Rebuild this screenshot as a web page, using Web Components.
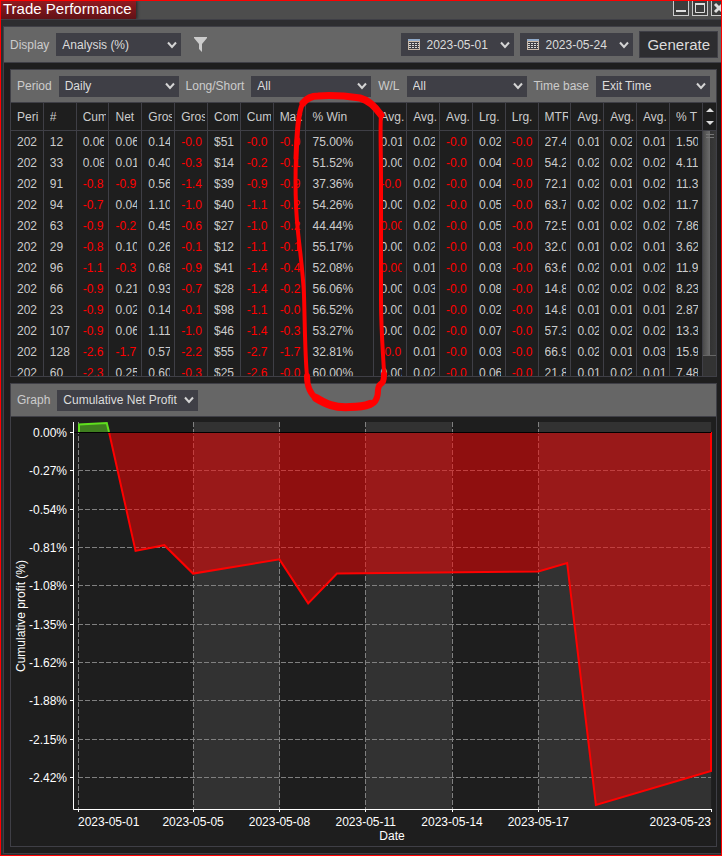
<!DOCTYPE html>
<html lang="en">
<head>
<meta charset="utf-8">
<title>Trade Performance</title>
<style>
    html {
        background: #1e1e1e;
    }

    body {
        margin: 0;
        font: 12px/16px "Liberation Sans", Arial, sans-serif;
        color: #ccc;
    }
</style>
</head>
<body>
<trade-window heading="Trade Performance">
    <tool-bar class="main">
        <drop-down label="Display" value="Analysis (%)" size="medium"></drop-down>
        <filter-button></filter-button>
        <date-picker slot="end" value="2023-05-01" label="Start date"></date-picker>
        <date-picker slot="end" value="2023-05-24" label="End date"></date-picker>
        <action-button slot="end">Generate</action-button>
    </tool-bar>
    <panel-box slot="panels">
        <tool-bar>
            <drop-down label="Period" value="Daily"></drop-down>
            <drop-down label="Long/Short" value="All"></drop-down>
            <drop-down label="W/L" value="All"></drop-down>
            <drop-down label="Time base" value="Exit Time" size="small"></drop-down>
        </tool-bar>
        <performance-table></performance-table>
    </panel-box>
    <panel-box slot="panels">
        <tool-bar>
            <drop-down label="Graph" value="Cumulative Net Profit" size="large"></drop-down>
        </tool-bar>
        <profit-chart></profit-chart>
    </panel-box>
    <pen-mark slot="overlay"></pen-mark>
</trade-window>

<script>
class TradeWindow extends HTMLElement {
    constructor() {
        super();
        this.attachShadow({mode: 'open'});
        this.shadowRoot.innerHTML = `
        <style>
            :host {
                display: block;
                box-sizing: border-box;
                position: relative;
                min-height: 100vh;
                padding-bottom: 1px;
                overflow: hidden;
                background: #2d2d30;
                border: 1px solid #f00;
            }

            header {
                display: flex;
                justify-content: space-between;
                height: 18px;
                overflow: hidden;
                background: #4d4d4d;
                border-bottom: 1px solid #3f3f46;
            }

            h1 {
                margin: 0;
                padding: 0 4px 0 2px;
                font-size: 15px;
                font-weight: normal;
                line-height: 15px;
                color: #fff;
                background: linear-gradient(#8f1a20, #611116);
                box-shadow: 1px 0 3px #222;
            }

            nav {
                display: flex;
                gap: 3px;
                margin-right: -6px;
            }

            nav button {
                box-sizing: border-box;
                width: 16px;
                height: 15px;
                padding: 0;
                background: #3c3c3c;
                border: 1px solid #ccc;
                border-top: 0;
            }

            nav svg {
                display: block;
            }

            main {
                margin: 6px 0 0 2px;
                background: #1e1e1e;
                border: 1px solid #3f3f46;
                border-right: 0;
            }

            .panels {
                display: grid;
                gap: 6px;
                padding: 6px 4px 6px 6px;
            }
        </style>
        <header>
            <h1></h1>
            <nav>
                <button aria-label="Minimize"><svg width="14" height="14"><path d="M2 10h10" stroke="#ddd" stroke-width="2"/></svg></button>
                <button aria-label="Maximize"><svg width="14" height="14"><path d="M2.500 3.500h9v8h-9z" fill="none" stroke="#ddd"/><path d="M2 3h10" stroke="#ddd" stroke-width="2"/></svg></button>
                <button aria-label="Close"><svg width="14" height="14"><path d="M3 3l8 8M11 3l-8 8" stroke="#ddd" stroke-width="3"/></svg></button>
            </nav>
        </header>
        <main>
            <slot></slot>
            <div class="panels"><slot name="panels"></slot></div>
        </main>
        <slot name="overlay"></slot>
        `;
    }

    connectedCallback() {
        this.shadowRoot.querySelector('h1').textContent = this.getAttribute('heading');
    }
}

class PanelBox extends HTMLElement {
    constructor() {
        super();
        this.attachShadow({mode: 'open'});
        this.shadowRoot.innerHTML = `
        <style>
            :host {
                display: block;
                min-width: 0;
                border: 1px solid #3f3f46;
            }
        </style>
        <slot></slot>
        `;
    }
}

class ToolBar extends HTMLElement {
    constructor() {
        super();
        this.attachShadow({mode: 'open'});
        this.shadowRoot.innerHTML = `
        <style>
            :host {
                display: flex;
                align-items: center;
                justify-content: space-between;
                gap: 6px;
                height: 32px;
                padding: 0 6px;
                background: #666;
                border-bottom: 1px solid #3f3f46;
            }

            :host(.main) {
                --control-height: 23px;
                justify-content: flex-start;
                height: 35px;
                padding: 0 3px 0 6px;
            }

            .end {
                display: flex;
                align-items: center;
                gap: 6px;
                margin-left: auto;
            }

            .end.empty {
                display: none;
            }
        </style>
        <slot></slot>
        <div class="end"><slot name="end"></slot></div>
        `;
    }

    connectedCallback() {
        if (!this.querySelector('[slot=end]')) {
            this.shadowRoot.querySelector('.end').classList.add('empty');
        }
    }
}

class DropDown extends HTMLElement {
    constructor() {
        super();
        this.attachShadow({mode: 'open'});
        this.shadowRoot.innerHTML = `
        <style>
            :host {
                display: flex;
                align-items: center;
                gap: 7px;
                white-space: nowrap;
            }

            .box {
                display: grid;
                align-items: center;
                width: 120px;
            }

            :host([size=small]) .box {
                width: 114px;
            }

            :host([size=medium]) .box {
                width: 125px;
            }

            :host([size=large]) .box {
                width: 141px;
            }

            select, svg {
                grid-area: 1 / 1;
            }

            select {
                appearance: none;
                box-sizing: border-box;
                width: 100%;
                height: var(--control-height, 21px);
                margin: 0;
                padding: 0 0 0 6px;
                font: inherit;
                color: #dcdcdc;
                background: #3f3f46;
                border: 0;
                border-radius: 0;
            }

            svg {
                justify-self: end;
                margin-right: 4px;
                pointer-events: none;
            }
        </style>
        <label for="field"></label>
        <span class="box">
            <select id="field"><option></option></select>
            <svg width="10" height="8"><path d="M1 1.500l4 4.500l4-4.500" fill="none" stroke="#d4d4d4" stroke-width="2"/></svg>
        </span>
        `;
    }

    connectedCallback() {
        this.shadowRoot.querySelector('label').textContent = this.getAttribute('label');
        this.shadowRoot.querySelector('option').textContent = this.getAttribute('value');
    }
}

class FilterButton extends HTMLElement {
    constructor() {
        super();
        this.attachShadow({mode: 'open'});
        this.shadowRoot.innerHTML = `
        <style>
            button {
                display: block;
                padding: 0 7px;
                background: none;
                border: 0;
            }

            svg {
                display: block;
            }
        </style>
        <button aria-label="Filter"><svg width="13" height="15"><path d="M0 0h13v1l-5 6v8l-3-3v-5l-5-6z" fill="#ccc"/></svg></button>
        `;
    }
}

class DatePicker extends HTMLElement {
    constructor() {
        super();
        this.attachShadow({mode: 'open'});
        this.shadowRoot.innerHTML = `
        <style>
            button {
                display: flex;
                align-items: center;
                gap: 6px;
                box-sizing: border-box;
                width: 113px;
                height: 23px;
                padding: 0 4px 0 7px;
                font: inherit;
                color: #dcdcdc;
                background: #3f3f46;
                border: 0;
            }

            svg:last-child {
                margin-left: auto;
            }
        </style>
        <button>
            <svg width="12" height="11"><path d="M0 0h12v11h-12z" fill="#c8b8a8"/><path d="M0 0h12v2h-12z" fill="#8fa9c9"/><path d="M1 3h10v7h-10z" fill="#3f3f46"/><path d="M1 4.500h10M1 6.500h10M1 8.500h10" stroke="#d8d8d8" stroke-dasharray="2 1"/></svg>
            <span></span>
            <svg width="10" height="8"><path d="M1 1.500l4 4.500l4-4.500" fill="none" stroke="#d4d4d4" stroke-width="2"/></svg>
        </button>
        `;
    }

    connectedCallback() {
        this.shadowRoot.querySelector('span').textContent = this.getAttribute('value');
        this.shadowRoot.querySelector('button').title = this.getAttribute('label');
    }
}

class ActionButton extends HTMLElement {
    constructor() {
        super();
        this.attachShadow({mode: 'open'});
        this.shadowRoot.innerHTML = `
        <style>
            button {
                display: block;
                box-sizing: border-box;
                height: 27px;
                padding: 0 7px;
                font: inherit;
                font-size: 15px;
                color: #dcdcdc;
                background: #2d2d30;
                border: 1px solid #3f3f46;
            }
        </style>
        <button><slot></slot></button>
        `;
    }
}

const columns = ['Peri', '#', 'Cum', 'Net', 'Gros', 'Gros', 'Com', 'Cum', 'Max', '% Win', 'Avg.', 'Avg.', 'Avg.', 'Lrg.', 'Lrg.', 'MTR', 'Avg.', 'Avg.', 'Avg.', '% T'];

// a leading ! marks a loss that rounds to zero
const trades = [
    '202 12 0.06 0.06 0.14 -0.0 $51 -0.0 -0.0 75.00% 0.01 0.02 -0.0 0.02 -0.0 27.4 0.01 0.02 0.01 1.50',
    '202 33 0.08 0.01 0.40 -0.3 $14 -0.2 -0.1 51.52% 0.00 0.02 -0.0 0.04 -0.0 54.2 0.02 0.02 0.02 4.11',
    '202 91 -0.8 -0.9 0.56 -1.4 $39 -0.9 -0.9 37.36% -0.0 0.02 -0.0 0.04 -0.0 72.1 0.02 0.01 0.02 11.3',
    '202 94 -0.7 0.04 1.10 -1.0 $40 -1.1 -0.2 54.26% 0.00 0.02 -0.0 0.05 -0.0 63.7 0.02 0.02 0.02 11.7',
    '202 63 -0.9 -0.2 0.45 -0.6 $27 -1.0 -0.2 44.44% !0.00 0.02 -0.0 0.05 -0.0 72.5 0.01 0.02 0.02 7.86',
    '202 29 -0.8 0.10 0.26 -0.1 $12 -1.1 -0.1 55.17% 0.00 0.02 -0.0 0.03 -0.0 32.0 0.01 0.02 0.01 3.62',
    '202 96 -1.1 -0.3 0.68 -0.9 $41 -1.4 -0.4 52.08% !0.00 0.01 -0.0 0.03 -0.0 63.6 0.02 0.01 0.02 11.9',
    '202 66 -0.9 0.21 0.93 -0.7 $28 -1.4 -0.2 56.06% 0.00 0.03 -0.0 0.08 -0.0 14.8 0.02 0.02 0.02 8.23',
    '202 23 -0.9 0.02 0.14 -0.1 $98 -1.1 -0.0 56.52% 0.00 0.01 -0.0 0.02 -0.0 14.8 0.01 0.01 0.01 2.87',
    '202 107 -0.9 0.06 1.11 -1.0 $46 -1.4 -0.3 53.27% 0.00 0.02 -0.0 0.07 -0.0 57.3 0.02 0.02 0.02 13.3',
    '202 128 -2.6 -1.7 0.57 -2.2 $55 -2.7 -1.7 32.81% -0.0 0.01 -0.0 0.03 -0.0 66.9 0.02 0.01 0.03 15.9',
    '202 60 -2.3 0.25 0.60 -0.3 $25 -2.6 -0.0 60.00% 0.00 0.02 -0.0 0.06 -0.0 21.8 0.01 0.02 0.01 7.48',
];

class PerformanceTable extends HTMLElement {
    constructor() {
        super();
        this.attachShadow({mode: 'open'});
        this.shadowRoot.innerHTML = `
        <style>
            :host {
                display: grid;
                grid-template-columns: minmax(0, 1fr) 13px;
                height: 273px;
                overflow: hidden;
            }

            .rows {
                min-height: 0;
                overflow: hidden;
            }

            table {
                width: 100%;
                table-layout: fixed;
                border-collapse: separate;
                border-spacing: 0;
            }

            col.wide {
                width: 68px;
            }

            th, td {
                height: 21px;
                padding: 0 4px 0 6px;
                font-weight: normal;
                text-align: left;
                border-right: 1px solid #3f3f46;
            }

            th {
                height: 27px;
                padding-right: 2px;
                border-bottom: 1px solid #3f3f46;
            }

            span {
                display: block;
                overflow: hidden;
                white-space: nowrap;
            }

            .loss {
                color: #f00;
            }

            .scroll {
                display: flex;
                flex-direction: column;
                background: #333;
            }

            .arrows {
                height: 27px;
                background: #1e1e1e;
                border-bottom: 1px solid #3f3f46;
            }

            .thumb {
                height: 224px;
                background: linear-gradient(90deg, #4a4a4a, #6a6a6a 50%, #333 55%, #3a3a3a);
                border-bottom: 1px solid #666;
            }

            svg {
                display: block;
            }
        </style>
        <div class="rows">
            <table>
                <colgroup></colgroup>
                <thead><tr></tr></thead>
                <tbody></tbody>
            </table>
        </div>
        <div class="scroll">
            <div class="arrows"><svg width="13" height="27"><path d="M3 9l4-4l4 4zM3 18l4 4l4-4z" fill="#ddd"/></svg></div>
            <div class="thumb"><svg width="13" height="10"><path d="M3 3.500h8M3 6.500h8" stroke="#777"/></svg></div>
        </div>
        `;
    }

    connectedCallback() {
        const root = this.shadowRoot;
        columns.forEach((name) => {
            const col = document.createElement('col');
            if (name === '% Win') {
                col.className = 'wide';
            }
            root.querySelector('colgroup').appendChild(col);
            root.querySelector('thead tr').appendChild(this._cell('th', name));
        });
        trades.forEach((trade) => {
            const row = document.createElement('tr');
            trade.split(' ').forEach((value) => row.appendChild(this._cell('td', value)));
            root.querySelector('tbody').appendChild(row);
        });
    }

    _cell(tag, value) {
        const cell = document.createElement(tag);
        const text = document.createElement('span');
        text.textContent = value.replace('!', '');
        if (/^[-!]/.test(value)) {
            cell.className = 'loss';
        }
        cell.appendChild(text);
        return cell;
    }
}

// [day of May 2023, cumulative net profit in %]
const profits = [[1, 0.06], [2, 0.07], [3, -0.83], [4, -0.79], [5, -0.99], [8, -0.89], [9, -1.2], [10, -0.99], [17, -0.975], [18, -0.915], [19, -2.62], [23, -2.38]];

class ProfitChart extends HTMLElement {
    constructor() {
        super();
        this.attachShadow({mode: 'open'});
        this.shadowRoot.innerHTML = `
        <style>
            :host {
                display: block;
            }

            svg {
                display: block;
                width: 100%;
                height: auto;
            }

            text {
                font-size: 12px;
                fill: #fff;
            }

            .grid {
                stroke: #808080;
                stroke-dasharray: 5 2;
            }

            .axis {
                stroke: #fff;
            }

            .loss {
                fill: rgba(255, 0, 0, 0.5);
                stroke: #f00;
                stroke-width: 2;
            }

            .gain {
                fill: rgba(96, 224, 32, 0.5);
                stroke: #5fdf1e;
                stroke-width: 2;
            }
        </style>
        <svg viewBox="0 0 705 429" role="img" aria-label="Cumulative profit by date"></svg>
        `;
    }

    connectedCallback() {
        const left = 67;
        const right = 700;
        const top = 5;
        const zero = 15;
        const bottom = 392;
        const x = (day) => left + (day - 1) * (right - left) / 22;
        const y = (value) => zero + 1 - value * 142;
        const snap = (n) => Math.floor(n) + 0.5;
        const rowY = (i) => Math.round(zero + i * 38.33) + 0.5;
        const days = [1, 5, 8, 11, 14, 17, 23];
        let out = '';

        // shaded bands on every second interval
        [[5, 8], [11, 14], [17, 23]].forEach(([from, to]) => {
            out += `<rect x="${snap(x(from))}" y="${top}" width="${x(to) - x(from)}" height="${bottom - top}" fill="#323232"/>`;
        });

        for (let i = 1; i < 10; i++) {
            out += `<path class="grid" d="M${left} ${rowY(i)}H${right}"/>`;
        }
        days.slice(0, -1).forEach((day) => {
            out += `<path class="grid" d="M${snap(x(day))} ${top}V${bottom}"/>`;
        });

        const points = profits.map(([day, value]) => `${x(day)} ${y(value)}`);
        const cross = 98;
        out += `<path class="gain" d="M${left + 1} ${zero}V${y(0.06)}L${points[1]}L${cross} ${zero}" />`;
        out += `<path class="loss" d="M${cross} ${zero}L${points.slice(2).join('L')}V${zero}"/>`;
        out += `<path stroke="#000" d="M${left - 4} ${zero + 0.5}H${right}"/>`;

        out += `<path class="axis" d="M62.500 ${top}V${bottom + 0.5}H${right + 1}" fill="none"/>`;
        ['0.00%', '-0.27%', '-0.54%', '-0.81%', '-1.08%', '-1.35%', '-1.62%', '-1.88%', '-2.15%', '-2.42%'].forEach((label, i) => {
            out += `<path class="axis" d="M59 ${rowY(i)}H62"/>`;
            out += `<text x="56" y="${rowY(i) + 4.5}" text-anchor="end">${label}</text>`;
        });
        days.forEach((day, i) => {
            const anchor = i === 0 ? 'start' : i === days.length - 1 ? 'end' : 'middle';
            out += `<path class="axis" d="M${snap(x(day))} ${bottom}v3"/>`;
            out += `<text x="${x(day)}" y="409" text-anchor="${anchor}">2023-05-${String(day).padStart(2, '0')}</text>`;
        });
        out += `<text x="381" y="423" text-anchor="middle">Date</text>`;
        out += `<text transform="translate(14 199) rotate(-90)" text-anchor="middle">Cumulative profit (%)</text>`;
        this.shadowRoot.querySelector('svg').innerHTML = out;
    }
}

class PenMark extends HTMLElement {
    constructor() {
        super();
        this.attachShadow({mode: 'open'});
        this.shadowRoot.innerHTML = `
        <style>
            :host {
                position: absolute;
                top: 89px;
                left: 289px;
                pointer-events: none;
            }

            svg {
                display: block;
                fill: none;
                stroke: #f00;
                stroke-linecap: round;
                stroke-linejoin: round;
            }
        </style>
        <svg width="100" height="324">
            <path stroke-width="7" d="M13 13C17 8 22 6 28 6C42 5 56 6 70 8C78 10 84 15 91 25"/>
            <path stroke-width="5" d="M13 13C8 22 7 44 6 68"/>
            <path stroke-width="4" d="M91 23C90 40 91 60 91 90V210C91 240 93 262 94 282"/>
            <path stroke-width="4" d="M6 66C5 95 5 115 8 142C10 162 13 182 14 205C15 240 15 265 17 286"/>
            <path stroke-width="6" d="M94 284C94 298 89 290 88 300C88 308 86 314 78 315"/>
            <path stroke-width="6" d="M17 286C17 296 20 304 27 309"/>
            <path stroke-width="8" d="M26 308C36 314 44 318 60 317C68 317 75 316 80 314"/>
        </svg>
        `;
    }
}

customElements.define('trade-window', TradeWindow);
customElements.define('panel-box', PanelBox);
customElements.define('tool-bar', ToolBar);
customElements.define('drop-down', DropDown);
customElements.define('filter-button', FilterButton);
customElements.define('date-picker', DatePicker);
customElements.define('action-button', ActionButton);
customElements.define('performance-table', PerformanceTable);
customElements.define('profit-chart', ProfitChart);
customElements.define('pen-mark', PenMark);
</script>
</body>
</html>
